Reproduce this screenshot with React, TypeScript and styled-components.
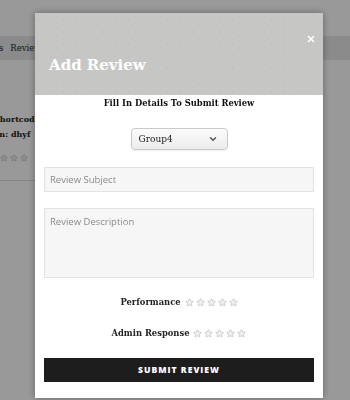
import * as React from 'react';
import styled, { createGlobalStyle } from 'styled-components';
import { ChevronDown, Star, X } from 'lucide-react';

const GlobalStyle = createGlobalStyle`
	html,
	body {
		margin: 0;
		padding: 0;
		width: 350px;
		height: 400px;
		overflow: hidden;
		background: #fff;
	}
`;

// page that sits behind the dimmed overlay
const Page = styled.div`
	width: 350px;
	height: 400px;
	font-family: 'DejaVu Serif', serif;
	color: #222;
	padding-top: 36px;
	box-sizing: border-box;
	overflow: hidden;
`;

const Crumbs = styled.div`
	height: 24px;
	background: #e8e8e8;
	display: flex;
	align-items: center;
	gap: 7px;
	margin-left: -22px;
	font-size: 8.5px;
`;

const PageBody = styled.div`
	padding-top: 54px;
	display: flex;
	flex-direction: column;
	gap: 5px;
	font-size: 8px;
	font-weight: bold;
`;

const PageLine = styled.span<{ $shift: number }>`
	margin-left: -${p => p.$shift}px;
	white-space: nowrap;
`;

const PageStars = styled.div`
	display: flex;
	gap: 1px;
	margin-top: 10px;
	margin-left: -20px;
	padding-bottom: 18px;
	border-bottom: 1px solid #ddd;
	width: 60px;
`;

const Overlay = styled.div`
	position: fixed;
	inset: 0;
	background: rgba(0, 0, 0, 0.4);
`;

const Modal = styled.div`
	position: fixed;
	top: 13px;
	left: 35px;
	width: 288px;
	height: 385px;
	background: #fff;
	box-shadow: 0 0 7px rgba(0, 0, 0, 0.35);
	display: flex;
	flex-direction: column;
`;

const Header = styled.div`
	position: relative;
	height: 82px;
	box-sizing: border-box;
	padding: 42px 14px 0;
	background-color: #c6c7c5;
	background-image: radial-gradient(rgba(214, 165, 120, 0.4) 0.5px, transparent 0.8px),
		radial-gradient(rgba(150, 150, 150, 0.25) 0.5px, transparent 0.8px);
	background-size: 17px 15px, 13px 12px;
	background-position: 3px 4px, 9px 1px;
`;

const Title = styled.h2`
	margin: 0;
	font-family: 'DejaVu Serif', serif;
	font-weight: bold;
	font-size: 15px;
	line-height: 20px;
	color: #fff;
`;

const Close = styled.button`
	position: absolute;
	top: 20px;
	right: 6px;
	width: 12px;
	height: 12px;
	padding: 0;
	border: 0;
	background: none;
	color: #fff;
	display: flex;
	align-items: center;
	justify-content: center;
`;

const Form = styled.div`
	flex: 1;
	display: flex;
	flex-direction: column;
	align-items: center;
	padding: 0 9px 16px;
`;

const Subtitle = styled.div`
	font-family: 'DejaVu Serif', serif;
	font-weight: bold;
	font-size: 8.4px;
	line-height: 16px;
	color: #111;
`;

const Select = styled.div`
	margin-top: 17px;
	width: 97px;
	height: 22px;
	box-sizing: border-box;
	border: 1px solid #c9c9c9;
	border-radius: 4px;
	background: linear-gradient(#fbfbfb, #ececec);
	display: flex;
	align-items: center;
	justify-content: space-between;
	padding: 0 9px 0 7px;
	font-family: 'DejaVu Serif', serif;
	font-size: 9px;
	color: #222;
	box-shadow: 0 1px 1px rgba(0, 0, 0, 0.06);
`;

const Field = styled.div<{ $tall?: boolean; $gap: number }>`
	margin-top: ${p => p.$gap}px;
	width: 100%;
	height: ${p => (p.$tall ? 70 : 25)}px;
	box-sizing: border-box;
	background: #f6f6f6;
	border: 1px solid #e3e3e3;
	padding: ${p => (p.$tall ? '6px 5px' : '0 5px')};
	display: flex;
	align-items: ${p => (p.$tall ? 'flex-start' : 'center')};
	font-family: 'Open Sans', sans-serif;
	font-size: 9.5px;
	color: #8a8a8a;
`;

const RatingRow = styled.div<{ $gap: number }>`
	margin-top: ${p => p.$gap}px;
	height: 14px;
	display: flex;
	align-items: center;
	gap: 4px;
	font-family: 'DejaVu Serif', serif;
	font-weight: bold;
	font-size: 8.4px;
	color: #222;
`;

const Stars = styled.div`
	display: flex;
	gap: 2px;
	color: #b5b5b5;
`;

const Submit = styled.button`
	margin-top: 18px;
	width: 100%;
	height: 24px;
	border: 0;
	background: #1d1d1d;
	color: #fff;
	font-family: 'Open Sans', sans-serif;
	font-weight: 800;
	font-size: 8.6px;
	letter-spacing: 1px;
`;

const StarSet = ({ size = 9 }: { size?: number }) => (
	<Stars>
		{[0, 1, 2, 3, 4].map(i => (
			<Star key={i} size={size} strokeWidth={1.6} fill="#efefef" />
		))}
	</Stars>
);

export default function App() {
	return (
		<>
			<GlobalStyle />
			<Page>
				<Crumbs>
					<span>Pages</span>
					<span>Reviews</span>
				</Crumbs>
				<PageBody>
					<PageLine $shift={6}>Shortcode</PageLine>
					<PageLine $shift={47}>Description: dhyf</PageLine>
					<PageStars>
						<StarSet size={8} />
					</PageStars>
				</PageBody>
			</Page>
			<Overlay />
			<Modal>
				<Header>
					<Title>Add Review</Title>
					<Close aria-label="close">
						<X size={10} strokeWidth={4} />
					</Close>
				</Header>
				<Form>
					<Subtitle>Fill In Details To Submit Review</Subtitle>
					<Select>
						<span>Group4</span>
						<ChevronDown size={10} strokeWidth={3.5} color="#555" />
					</Select>
					<Field $gap={17}>Review Subject</Field>
					<Field $gap={16} $tall>
						Review Description
					</Field>
					<RatingRow $gap={17}>
						Performance <StarSet />
					</RatingRow>
					<RatingRow $gap={17}>
						Admin Response <StarSet />
					</RatingRow>
					<Submit>SUBMIT REVIEW</Submit>
				</Form>
			</Modal>
		</>
	);
}
